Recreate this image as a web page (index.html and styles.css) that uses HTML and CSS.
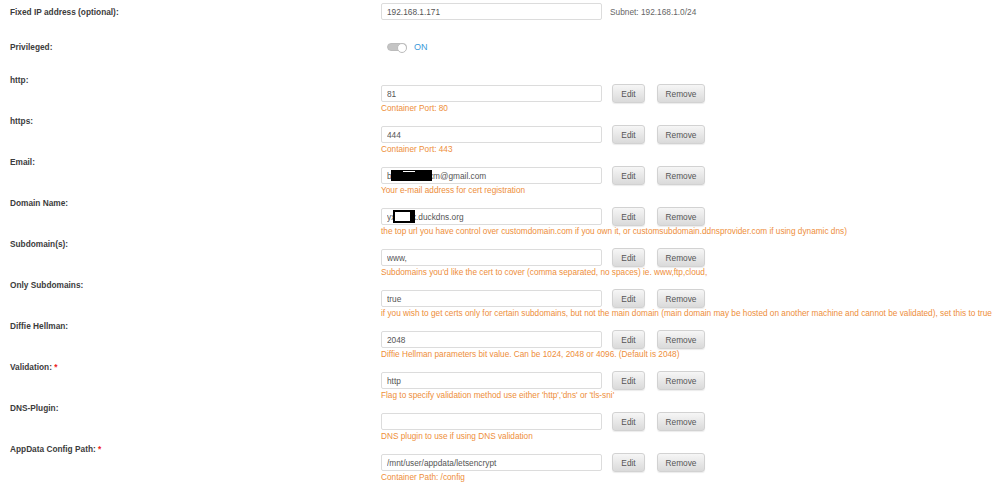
FILE: index.html
```html
<!DOCTYPE html>
<html lang="en">
<head>
    <meta charset="UTF-8">
    <meta name="viewport" content="width=device-width, initial-scale=1.0">
    <title>Update Container</title>
    <link rel="stylesheet" href="styles.css">
</head>
<body>
    <div class="form">
        <div class="row row-top">
            <div class="label">Fixed IP address (optional):</div>
            <div class="value inline">
                <input type="text" class="field" value="192.168.1.171">
                <span class="note">Subnet: 192.168.1.0/24</span>
            </div>
        </div>

        <div class="row row-switch">
            <div class="label">Privileged:</div>
            <div class="value inline">
                <span class="switch"></span>
                <span class="switch-text">ON</span>
            </div>
        </div>

        <div class="row config">
            <div class="label">http:</div>
            <div class="value">
                <div class="controls">
                    <input type="text" class="field" value="81">
                    <button class="btn edit">Edit</button>
                    <button class="btn">Remove</button>
                </div>
                <div class="desc">Container Port: 80</div>
            </div>
        </div>

        <div class="row config">
            <div class="label">https:</div>
            <div class="value">
                <div class="controls">
                    <input type="text" class="field" value="444">
                    <button class="btn edit">Edit</button>
                    <button class="btn">Remove</button>
                </div>
                <div class="desc">Container Port: 443</div>
            </div>
        </div>

        <div class="row config">
            <div class="label">Email:</div>
            <div class="value">
                <div class="controls">
                    <span class="field-wrap">
                        <input type="text" class="field" value="bxxxxxxxxxxm@gmail.com">
                        <span class="hide hide-email"></span>
                    </span>
                    <button class="btn edit">Edit</button>
                    <button class="btn">Remove</button>
                </div>
                <div class="desc">Your e-mail address for cert registration</div>
            </div>
        </div>

        <div class="row config">
            <div class="label">Domain Name:</div>
            <div class="value">
                <div class="controls">
                    <span class="field-wrap">
                        <input type="text" class="field" value="yxxxxxx.duckdns.org">
                        <span class="hide hide-domain"></span>
                    </span>
                    <button class="btn edit">Edit</button>
                    <button class="btn">Remove</button>
                </div>
                <div class="desc">the top url you have control over customdomain.com if you own it, or customsubdomain.ddnsprovider.com if using dynamic dns)</div>
            </div>
        </div>

        <div class="row config">
            <div class="label">Subdomain(s):</div>
            <div class="value">
                <div class="controls">
                    <input type="text" class="field" value="www,">
                    <button class="btn edit">Edit</button>
                    <button class="btn">Remove</button>
                </div>
                <div class="desc">Subdomains you'd like the cert to cover (comma separated, no spaces) ie. www,ftp,cloud,</div>
            </div>
        </div>

        <div class="row config">
            <div class="label">Only Subdomains:</div>
            <div class="value">
                <div class="controls">
                    <input type="text" class="field" value="true">
                    <button class="btn edit">Edit</button>
                    <button class="btn">Remove</button>
                </div>
                <div class="desc">if you wish to get certs only for certain subdomains, but not the main domain (main domain may be hosted on another machine and cannot be validated), set this to true</div>
            </div>
        </div>

        <div class="row config">
            <div class="label">Diffie Hellman:</div>
            <div class="value">
                <div class="controls">
                    <input type="text" class="field" value="2048">
                    <button class="btn edit">Edit</button>
                    <button class="btn">Remove</button>
                </div>
                <div class="desc">Diffie Hellman parameters bit value. Can be 1024, 2048 or 4096. (Default is 2048)</div>
            </div>
        </div>

        <div class="row config">
            <div class="label">Validation: <span class="req">*</span></div>
            <div class="value">
                <div class="controls">
                    <input type="text" class="field" value="http">
                    <button class="btn edit">Edit</button>
                    <button class="btn">Remove</button>
                </div>
                <div class="desc">Flag to specify validation method use either 'http','dns' or 'tls-sni'</div>
            </div>
        </div>

        <div class="row config">
            <div class="label">DNS-Plugin:</div>
            <div class="value">
                <div class="controls">
                    <input type="text" class="field" value="">
                    <button class="btn edit">Edit</button>
                    <button class="btn">Remove</button>
                </div>
                <div class="desc">DNS plugin to use if using DNS validation</div>
            </div>
        </div>

        <div class="row config">
            <div class="label">AppData Config Path: <span class="req">*</span></div>
            <div class="value">
                <div class="controls">
                    <input type="text" class="field" value="/mnt/user/appdata/letsencrypt">
                    <button class="btn edit">Edit</button>
                    <button class="btn">Remove</button>
                </div>
                <div class="desc">Container Path: /config</div>
            </div>
        </div>
    </div>
</body>
</html>
```

FILE: styles.css
```css
:root {
    --label-color: #3c3c3c;
    --text-color: #555;
    --desc-color: #ee8e3a;
    --border-color: #dcdcdc;
    --link-color: #3a9ad9;
}

* {
    box-sizing: border-box;
    margin: 0;
    padding: 0;
}

body {
    font-family: 'Liberation Sans', Arial, Helvetica, sans-serif;
    font-size: 8.3px;
    line-height: 12px;
    color: var(--text-color);
    background-color: #fff;
}

.form {
    padding: 3px 0 0 10px;
}

.row {
    display: grid;
    grid-template-columns: 371px 1fr;
}

.label {
    font-weight: bold;
    color: var(--label-color);
}

.req {
    color: #e22;
}

.inline {
    display: flex;
    align-items: center;
}

.row-top {
    align-items: center;
    height: 17px;
}

.row-switch {
    margin-top: 21px;
    align-items: center;
    height: 12px;
}

.config {
    margin-top: 21px;
}

.config + .config {
    margin-top: 1px;
}

.config .value {
    padding-top: 10px;
}

.controls {
    display: flex;
    align-items: center;
    height: 19px;
}

.field-wrap {
    position: relative;
    display: flex;
}

.field {
    width: 221px;
    height: 17px;
    padding: 0 5px;
    border: 1px solid var(--border-color);
    border-radius: 2px;
    font-family: inherit;
    font-size: 8.3px;
    color: var(--text-color);
    background-color: #fff;
    outline: none;
}

.note {
    margin-left: 8px;
    color: #666;
}

.btn {
    height: 19px;
    margin-left: 10px;
    padding: 0 8px;
    border: 1px solid #d2d2d2;
    border-radius: 3px;
    background: linear-gradient(#f6f6f6, #dadada);
    box-shadow: 0 1px 1px rgba(0,0,0,0.08);
    font-family: inherit;
    font-size: 8.3px;
    color: var(--text-color);
    cursor: pointer;
}

.btn.edit {
    width: 33px;
    padding: 0;
}

.btn + .btn {
    margin-left: 12px;
    width: 48px;
    padding: 0;
}

.desc {
    font-size: 8.25px;
    line-height: 11px;
    color: var(--desc-color);
    white-space: nowrap;
}

/* privileged switch */
.switch {
    position: relative;
    width: 20px;
    height: 8px;
    margin-left: 6px;
    border: 1px solid #bcbcbc;
    border-radius: 4px;
    background: linear-gradient(to right, #c4c4c4 60%, #fff 60%);
}

.switch::after {
    content: '';
    position: absolute;
    right: -1px;
    top: -1px;
    width: 8px;
    height: 8px;
    border: 1px solid #bcbcbc;
    border-radius: 50%;
    background-color: #fff;
}

.switch-text {
    margin-left: 7px;
    color: var(--link-color);
    font-size: 9px;
}

/* masked parts of private values */
.hide {
    position: absolute;
    top: 3px;
    height: 11px;
}

.hide-email {
    left: 10px;
    width: 41px;
    background-color: #000;
}

.hide-email::after {
    content: '';
    position: absolute;
    left: 12px;
    top: 1px;
    width: 12px;
    height: 1px;
    background-color: #fff;
}

.hide-domain {
    left: 12px;
    width: 22px;
    top: 2px;
    height: 13px;
    border: 2px solid #000;
    border-right-width: 5px;
    background-color: #fff;
}
```
